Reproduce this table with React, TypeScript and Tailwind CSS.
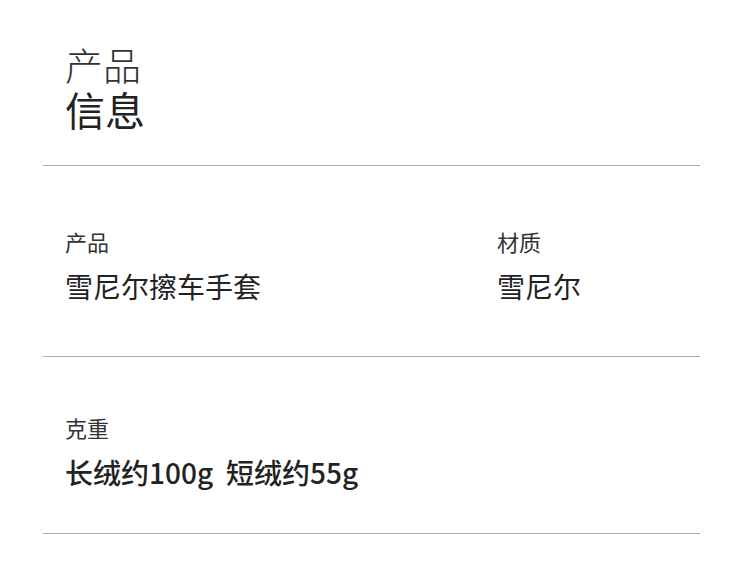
const SPECS = [
  [
    { label: "产品", value: "雪尼尔擦车手套" },
    { label: "材质", value: "雪尼尔" },
  ],
  [{ label: "克重", value: "长绒约100g", extra: "短绒约55g" }],
];

const Spec = ({
  label,
  value,
  extra,
  bold,
}: {
  label: string;
  value: string;
  extra?: string;
  bold?: boolean;
}) => (
  <div className="flex flex-col">
    <p className="text-[22px] leading-[28px] text-[#333]">{label}</p>
    <p
      className={
        bold
          ? "mt-[13px] text-[28px] leading-[36px] text-[#222] font-medium"
          : "mt-[13px] text-[28px] leading-[36px] text-[#222] font-normal"
      }
    >
      {value}
      {extra && <span className="ml-[13px]">{extra}</span>}
    </p>
  </div>
);

export default function App() {
  return (
    <div
      className="w-[750px] h-[565px] bg-white overflow-hidden"
      style={{ fontFamily: '"Noto Sans CJK SC", "Noto Sans", sans-serif' }}
    >
      <div className="ml-[43px] w-[657px]">
        <div className="px-[22px] pt-[42px] pb-[33px]">
          <h2 className="text-[38px] leading-[44px] font-extralight text-[#333]">产品</h2>
          <h2 className="text-[40px] leading-[46px] font-normal text-[#222]">信息</h2>
        </div>
        <div className="h-px bg-[#aaa]" />

        <div className="flex px-[22px] pt-[61px] pb-[52px]">
          <div className="w-[432px]">
            <Spec {...SPECS[0][0]} />
          </div>
          <Spec {...SPECS[0][1]} />
        </div>
        <div className="h-px bg-[#aaa]" />

        <div className="px-[22px] pt-[56px] pb-[43px]">
          <Spec {...SPECS[1][0]} bold />
        </div>
        <div className="h-px bg-[#aaa]" />
      </div>
    </div>
  );
}
